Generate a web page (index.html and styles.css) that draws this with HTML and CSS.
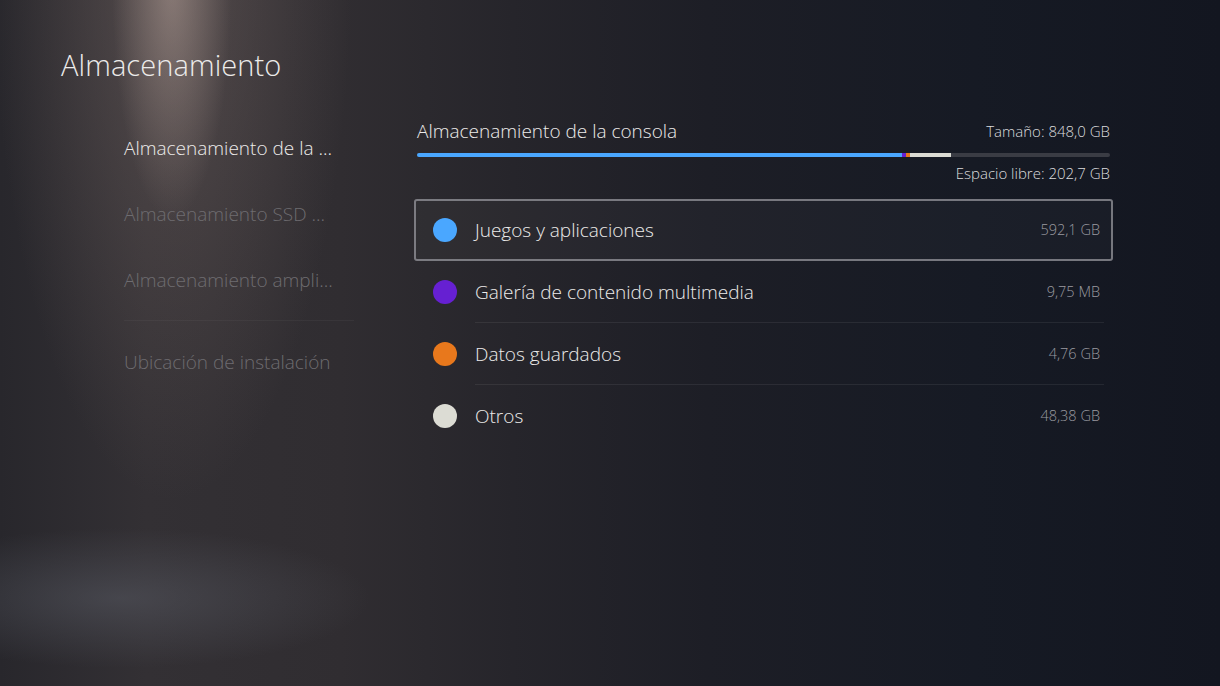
FILE: index.html
```html
<!DOCTYPE html>
<html lang="es">
<head>
    <meta charset="UTF-8">
    <meta name="viewport" content="width=device-width, initial-scale=1.0">
    <title>Almacenamiento</title>
    <link rel="stylesheet" href="styles.css">
</head>
<body>
    <div class="screen">
        <h1 class="page-title">Almacenamiento</h1>

        <div class="main">
            <nav class="side-nav">
                <div class="nav-item active">Almacenamiento de la ...</div>
                <div class="nav-item">Almacenamiento SSD ...</div>
                <div class="nav-item">Almacenamiento ampli...</div>
                <div class="nav-divider"></div>
                <div class="nav-item">Ubicación de instalación</div>
            </nav>

            <section class="storage-panel">
                <div class="panel-head">
                    <h2>Almacenamiento de la consola</h2>
                    <span class="meta">Tamaño: 848,0 GB</span>
                </div>

                <div class="usage-bar">
                    <span class="seg seg-games" style="width: 70%"></span>
                    <span class="seg seg-media" style="width: 0.5%"></span>
                    <span class="seg seg-saves" style="width: 0.6%"></span>
                    <span class="seg seg-other" style="width: 5.9%"></span>
                </div>

                <div class="free-space">Espacio libre: 202,7 GB</div>

                <ul class="usage-list">
                    <li class="usage-row selected">
                        <span class="dot dot-games"></span>
                        <div class="row-body">
                            <span class="row-label">Juegos y aplicaciones</span>
                            <span class="row-value">592,1 GB</span>
                        </div>
                    </li>
                    <li class="usage-row">
                        <span class="dot dot-media"></span>
                        <div class="row-body">
                            <span class="row-label">Galería de contenido multimedia</span>
                            <span class="row-value">9,75 MB</span>
                        </div>
                    </li>
                    <li class="usage-row">
                        <span class="dot dot-saves"></span>
                        <div class="row-body">
                            <span class="row-label">Datos guardados</span>
                            <span class="row-value">4,76 GB</span>
                        </div>
                    </li>
                    <li class="usage-row">
                        <span class="dot dot-other"></span>
                        <div class="row-body">
                            <span class="row-label">Otros</span>
                            <span class="row-value">48,38 GB</span>
                        </div>
                    </li>
                </ul>
            </section>
        </div>
    </div>
</body>
</html>
```

FILE: styles.css
```css
:root {
    --text-primary: #ecebea;
    --text-muted: #6e6c70;
    --text-value: #9a9aa0;
    --games: #4aa7ff;
    --media: #6620d2;
    --saves: #e8781c;
    --other: #dcdcd4;
    --track: #3a3c44;
}

* {
    margin: 0;
    padding: 0;
    box-sizing: border-box;
}

html, body {
    width: 100%;
    height: 100%;
}

body {
    font-family: 'Open Sans', 'Noto Sans', sans-serif;
    color: var(--text-primary);
    overflow: hidden;
    background:
        radial-gradient(ellipse 60px 240px at 172px -20px, rgba(180, 160, 152, 0.55), rgba(180, 160, 152, 0) 100%),
        radial-gradient(ellipse 180px 540px at 172px -40px, rgba(120, 105, 102, 0.5), rgba(120, 105, 102, 0) 100%),
        radial-gradient(ellipse 250px 70px at 120px 598px, rgba(95, 98, 108, 0.45), rgba(95, 98, 108, 0) 100%),
        linear-gradient(90deg, #28272c 0%, #333034 12%, #302d31 28%, #26252b 42%, #1d1e26 58%, #161a24 80%, #131620 100%);
}

.screen {
    height: 100%;
}

.page-title {
    padding: 47px 0 0 61px;
    font-size: 29px;
    line-height: 36px;
    font-weight: 300;
    letter-spacing: 0.1px;
}

.main {
    display: flex;
    padding-left: 124px;
}

/* left menu */
.side-nav {
    width: 230px;
    margin-top: 32px;
}

.nav-item {
    height: 66px;
    line-height: 66px;
    font-size: 19px;
    font-weight: 300;
    color: var(--text-muted);
    white-space: nowrap;
}

.nav-item.active {
    color: var(--text-primary);
}

.nav-divider {
    height: 1px;
    margin: 7px 0 8px;
    background: rgba(255, 255, 255, 0.04);
}

/* storage panel */
.storage-panel {
    width: 699px;
    margin-left: 60px;
    margin-top: 35px;
}

.panel-head {
    display: flex;
    justify-content: space-between;
    align-items: center;
    height: 26px;
    padding: 0 3px;
}

.panel-head h2 {
    font-size: 19px;
    font-weight: 300;
}

.meta,
.free-space {
    font-size: 15px;
    font-weight: 300;
    color: #dcdcde;
}

.usage-bar {
    display: flex;
    height: 4px;
    margin: 9px 3px 0;
    border-radius: 2px;
    background: var(--track);
    overflow: hidden;
}

.seg { height: 100%; }
.seg-games { background: var(--games); }
.seg-media { background: var(--media); }
.seg-saves { background: var(--saves); }
.seg-other { background: var(--other); }

.free-space {
    text-align: right;
    height: 20px;
    line-height: 20px;
    margin-top: 6px;
    padding-right: 3px;
}

.usage-list {
    list-style: none;
    margin-top: 16px;
}

.usage-row {
    display: flex;
    align-items: center;
    gap: 18px;
    height: 62px;
    padding-left: 19px;
    border-radius: 3px;
}

.usage-row.selected {
    background: rgba(255, 255, 255, 0.025);
    box-shadow: inset 0 0 0 2px rgba(150, 150, 156, 0.75);
}

.dot {
    width: 24px;
    height: 24px;
    border-radius: 50%;
    flex-shrink: 0;
}

.dot-games { background: var(--games); }
.dot-media { background: var(--media); }
.dot-saves { background: var(--saves); }
.dot-other { background: var(--other); }

.row-body {
    flex: 1;
    height: 100%;
    display: flex;
    justify-content: space-between;
    align-items: center;
    margin-right: 9px;
    padding-right: 4px;
    border-bottom: 1px solid rgba(255, 255, 255, 0.07);
}

.usage-row.selected .row-body,
.usage-row:last-child .row-body {
    border-bottom-color: transparent;
}

.row-label {
    font-size: 19px;
    font-weight: 300;
}

.row-value {
    font-size: 14.5px;
    font-weight: 300;
    color: var(--text-value);
}
```
